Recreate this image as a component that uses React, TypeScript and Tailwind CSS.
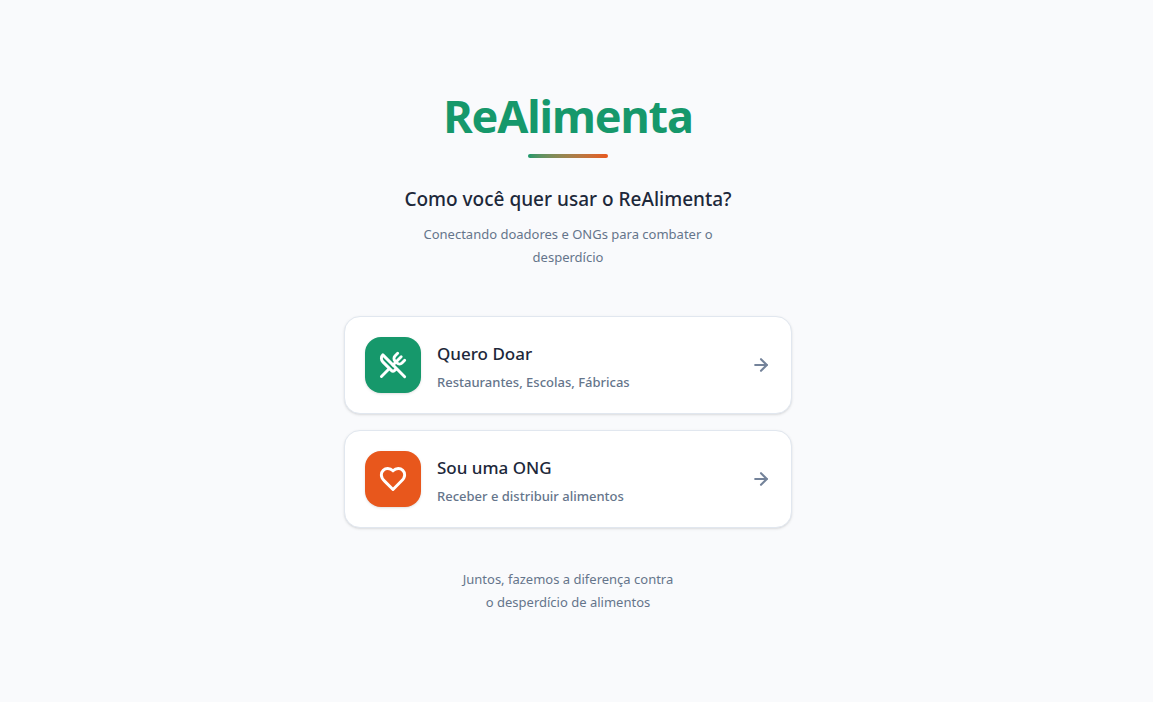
import React from 'react';
import { ArrowRight, UtensilsCrossed } from 'lucide-react';

type IconProps = {
    className?: string;
    strokeWidth?: number;
};

type ProfileOptionProps = {
    title: string;
    description: string;
    icon: React.ComponentType<IconProps>;
    iconBg: string;
};

// Heart with a sharp bottom tip
const HeartIcon: React.FC<IconProps> = ({ className, strokeWidth = 2 }) => (
    <svg
        className={className}
        viewBox="0 0 24 24"
        fill="none"
        stroke="currentColor"
        strokeWidth={strokeWidth}
        strokeLinecap="round"
        strokeLinejoin="round"
        aria-hidden="true"
    >
        <path d="M19 14c1.49-1.46 3-3.21 3-5.5A5.5 5.5 0 0 0 16.5 3c-1.76 0-3 .5-4.5 2-1.5-1.5-2.74-2-4.5-2A5.5 5.5 0 0 0 2 8.5c0 2.3 1.5 4.05 3 5.5l7 7Z" />
    </svg>
);

const ProfileOption: React.FC<ProfileOptionProps> = ({ title, description, icon: Icon, iconBg }) => {
    return (
        <button className="flex w-full items-center gap-4 rounded-2xl border border-[#e1e7ef] bg-white p-5 text-left shadow-sm">
            <span className={`flex size-14 shrink-0 items-center justify-center rounded-2xl text-white shadow-sm ${iconBg}`}>
                <Icon className="size-7" strokeWidth={2.5} />
            </span>
            <span className="flex-1 pt-1">
                <span className="mb-1.5 block text-[17px] leading-6 font-medium text-[#1d283a]">{title}</span>
                <span className="block text-[13px] leading-5 font-medium text-[#65758b]">{description}</span>
            </span>
            <ArrowRight className="size-5 text-[#74839a]" strokeWidth={2.5} />
        </button>
    );
};

const App: React.FC = () => {
    return (
        <div className="flex min-h-screen flex-col items-center justify-center bg-[#f9fafc] pt-7 pr-[33px] pb-6 pl-4 font-['Noto_Sans',sans-serif]">
            <main className="w-full max-w-md">
                <header className="mb-[47px] text-center">
                    <h1 className="mb-3.5 text-[45px] leading-[48px] font-bold tracking-tight text-[#16986b]">ReAlimenta</h1>
                    <div className="mx-auto mb-[25px] h-1 w-20 rounded-full bg-linear-to-r from-[#16986b] to-[#e8571c]" />
                    <h2 className="mb-2 text-[19px] leading-8 font-medium text-[#1d283a]">Como você quer usar o ReAlimenta?</h2>
                    <p className="mx-auto max-w-xs text-[13px] leading-[23px] text-[#65758b]">
                        Conectando doadores e ONGs para combater o desperdício
                    </p>
                </header>
                <div className="flex flex-col gap-4">
                    <ProfileOption
                        title="Quero Doar"
                        description="Restaurantes, Escolas, Fábricas"
                        icon={UtensilsCrossed}
                        iconBg="bg-[#16986b]"
                    />
                    <ProfileOption
                        title="Sou uma ONG"
                        description="Receber e distribuir alimentos"
                        icon={HeartIcon}
                        iconBg="bg-[#e8571c]"
                    />
                </div>
                <p className="mt-10 text-center text-[13px] leading-[23px] text-[#65758b]">
                    Juntos, fazemos a diferença contra
                    <br />o desperdício de alimentos
                </p>
            </main>
        </div>
    );
};

export default App;
